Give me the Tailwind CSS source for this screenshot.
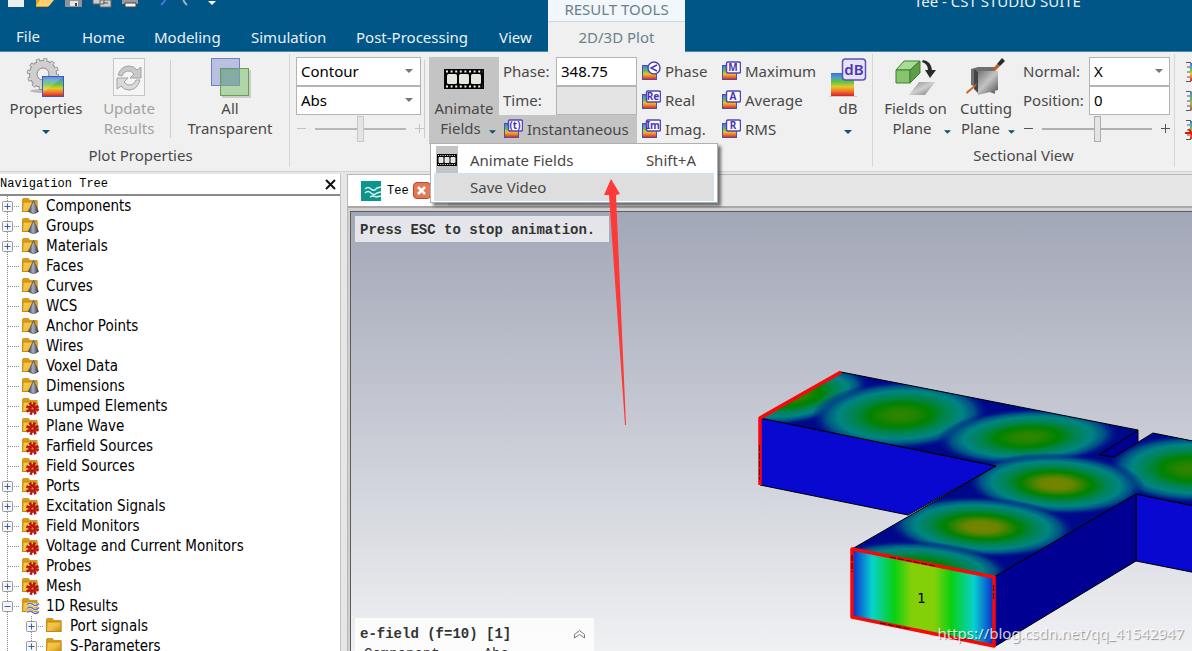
<!DOCTYPE html>
<html lang="en">
<head>
  <meta charset="UTF-8" />
  <meta name="viewport" content="width=device-width, initial-scale=1.0"/>
  <title>Tee - CST STUDIO SUITE</title>
  <script src="https://cdn.jsdelivr.net/npm/@tailwindcss/browser@4"></script>
</head>
<body class="h-screen overflow-hidden flex flex-col bg-[#e6e6e6] text-[#484848] text-[15px] leading-5 font-['Noto_Sans',sans-serif]">

  <!-- Shared icons -->
  <svg class="absolute w-0 h-0">
    <defs>
      <linearGradient id="rainbow" x1="0" y1="0" x2="0" y2="1">
        <stop offset="0" stop-color="#3f6fe0"/><stop offset=".2" stop-color="#4fa0c8"/><stop offset=".38" stop-color="#59c53c"/>
        <stop offset=".6" stop-color="#e6c62c"/><stop offset=".8" stop-color="#f0742a"/><stop offset="1" stop-color="#d81f26"/>
      </linearGradient>
      <linearGradient id="folderFill" x1="0" y1="0" x2="1" y2="1">
        <stop offset="0" stop-color="#f6c93f"/><stop offset=".5" stop-color="#f0c04a"/><stop offset="1" stop-color="#c98a08"/>
      </linearGradient>
      <linearGradient id="metal" x1="0" y1="0" x2="1" y2="1">
        <stop offset="0" stop-color="#6a6a6a"/><stop offset=".5" stop-color="#c4c4c4"/><stop offset="1" stop-color="#4a4a4a"/>
      </linearGradient>
      <linearGradient id="cone" x1="0" y1="0" x2="1" y2="0">
        <stop offset="0" stop-color="#3c3f4c"/><stop offset=".45" stop-color="#a9b0c8"/><stop offset="1" stop-color="#33353f"/>
      </linearGradient>
    </defs>
    <symbol id="plot" viewBox="0 0 20 20">
      <rect x="1.500" y="4.500" width="14" height="14" fill="url(#rainbow)" stroke="#4a4fb0"/>
      <rect x="5.500" y="1" width="14" height="11" rx="1.500" fill="#fff" stroke="#5543b8" stroke-width="1.500"/>
    </symbol>
    <symbol id="film" viewBox="0 0 40 20">
      <rect width="40" height="20" fill="#050505"/>
      <path d="M2 2.500H39M2 17.500H39" stroke="#eee" stroke-width="2" stroke-dasharray="2 2.600"/>
      <g fill="#e4e6e0"><rect x="3" y="5" width="10" height="10" rx="1.500"/><rect x="15" y="5" width="10" height="10" rx="1.500"/><rect x="27" y="5" width="10" height="10" rx="1.500"/></g>
    </symbol>
    <symbol id="down" viewBox="0 0 8 4"><path d="M0 0H8L4 4Z" fill="currentColor"/></symbol>
    <symbol id="folder" viewBox="0 0 20 20">
      <path d="M2 3.500Q2 2 3.500 2H8.500L10 4H17.500V16H2Z" fill="#d69a1c"/>
      <path d="M3 6H17V15.500H2.500Z" fill="url(#folderFill)" stroke="#c48a10"/>
    </symbol>
    <symbol id="folder-cone" viewBox="0 0 20 20">
      <use href="#folder"/>
      <path d="M13.500 4.500L18.500 15.500Q13.500 19.500 8.500 15.500Z" fill="url(#cone)" stroke="#333" stroke-width=".6"/>
    </symbol>
    <symbol id="folder-gear" viewBox="0 0 20 20">
      <use href="#folder"/>
      <circle cx="12.500" cy="12.500" r="5" fill="none" stroke="#b31212" stroke-width="3" stroke-dasharray="2.400 1.530"/>
      <circle cx="12.500" cy="12.500" r="4.200" fill="#c41818"/>
      <circle cx="12.500" cy="12.500" r="1.500" fill="#d98a2c" stroke="#7a0c0c" stroke-width=".6"/>
    </symbol>
    <symbol id="folder-waves" viewBox="0 0 20 20">
      <use href="#folder"/>
      <path d="M7 8.500q3-2.500 6 0t6-1M7 12.500q3-2.500 6 0t6-1M7 16.500q3-2.500 6 0t6-1" fill="none" stroke="#fff" stroke-width="2.600"/>
      <path d="M7 8.500q3-2.500 6 0t6-1M7 12.500q3-2.500 6 0t6-1M7 16.500q3-2.500 6 0t6-1" fill="none" stroke="#6470b0" stroke-width="1.400"/>
    </symbol>
    <symbol id="branch" viewBox="0 0 20 20">
      <path d="M7.500 0V20M8 10.500H20" stroke="#888" stroke-dasharray="1 1"/>
    </symbol>
    <symbol id="line" viewBox="0 0 24 20">
      <path d="M7.500 0V20" stroke="#888" stroke-dasharray="1 1"/>
    </symbol>
    <symbol id="plus" viewBox="0 0 20 20">
      <use href="#branch"/>
      <rect x="2.500" y="5.500" width="10" height="10" rx="1" fill="#f6f6f6" stroke="#9a9a9a"/>
      <path d="M4.500 10.500H10.500M7.500 7.500V13.500" stroke="#3a5cb0"/>
    </symbol>
    <symbol id="minus" viewBox="0 0 20 20">
      <use href="#branch"/>
      <rect x="2.500" y="5.500" width="10" height="10" rx="1" fill="#f6f6f6" stroke="#9a9a9a"/>
      <path d="M4.500 10.500H10.500" stroke="#3a5cb0"/>
    </symbol>
    <symbol id="scale" viewBox="0 0 20 20">
      <path d="M1 .5H6M1 19.500H6M2 5H6M2 10H6M2 15H6M5.500 0V20" stroke="#555"/>
      <rect x="5" y="1" width="14" height="18" fill="url(#rainbow)"/>
    </symbol>
  </svg>

  <!-- Title bar and ribbon tabs -->
  <header class="flex h-[52px] shrink-0 bg-[#005687] text-[#e8f0f5]">
    <div class="w-[548px] shrink-0 flex flex-col border-b border-[#4b86ab]">
      <svg class="h-[27px] w-[240px]" viewBox="0 0 240 27">
        <path d="M8-6H24V7H8Z" fill="#eceff0"/>
        <path d="M36-4H52V1L48 7H36Z" fill="#e8a01e"/><path d="M40 0H54L49 6H36Z" fill="#ffd070"/>
        <path d="M65-6H82V7H65Z" fill="#8e9496"/><path d="M70 1H78V6H70Z" fill="#e4e4e4"/><path d="M75 3H77V6H75Z" fill="#444"/>
        <path d="M93-4H104V4H93ZM100 0H111V7H100Z" fill="#c9cdce" stroke="#666"/><path d="M103 3H108" stroke="#555"/>
        <path d="M122-2H138V4H122Z" fill="#999"/><path d="M125 3H136V7H125Z" fill="#f3f3f3" stroke="#444"/>
        <path d="M161 5Q165 2 166-3" fill="none" stroke="#4676e8" stroke-width="2"/>
        <path d="M187 5Q183 2 183-3" fill="none" stroke="#a8b4bc" stroke-width="2"/>
        <path d="M208 1H216L212 5Z" fill="#fff"/>
      </svg>
      <nav class="flex pl-4">
        <a href="#" class="w-[66px] -mt-px">File</a>
        <a href="#" class="w-[72px]">Home</a>
        <a href="#" class="w-[97px]">Modeling</a>
        <a href="#" class="w-[105px]">Simulation</a>
        <a href="#" class="w-[143px]">Post-Processing</a>
        <a href="#">View</a>
      </nav>
    </div>
    <div class="w-[137px] shrink-0 flex flex-col text-center text-[#6b7f8c]">
      <div class="h-[23px] leading-[18px] bg-[#f1f7fb] border-b border-[#ccd6dc]">RESULT TOOLS</div>
      <a href="#" class="flex-1 bg-[#f0f0f0] leading-[30px]">2D/3D Plot</a>
    </div>
    <div class="flex-1 pl-[229px] border-b border-[#4b86ab] leading-[3px] whitespace-nowrap">Tee - CST STUDIO SUITE</div>
  </header>

  <!-- Ribbon -->
  <section class="flex h-[120px] shrink-0 pt-0.5 pb-1 bg-[#f0f0f0] border-b border-[#d2d2d2] whitespace-nowrap">

    <div class="w-[290px] shrink-0 pt-[3px] border-r border-[#d6d6d6]">
      <div class="flex h-[87px] pl-1">
        <button class="w-[84px] flex flex-col items-center">
          <svg class="h-[41px] w-[40px] shrink-0" viewBox="0 0 40 41">
            <ellipse cx="20" cy="34" rx="16" ry="2" fill="#bbb"/>
            <circle cx="17" cy="17" r="13.500" fill="none" stroke="#8b8b8b" stroke-width="5" stroke-dasharray="3.600 3.468"/>
            <circle cx="17" cy="17" r="9.500" fill="none" stroke="#8b8b8b" stroke-width="9"/>
            <circle cx="17" cy="17" r="13.500" fill="none" stroke="#d9d9d9" stroke-width="3.500" stroke-dasharray="2.400 4.668" stroke-dashoffset="-.6"/>
            <circle cx="17" cy="17" r="9.500" fill="none" stroke="#cfcfcf" stroke-width="7"/>
            <circle cx="17" cy="17" r="6" fill="#f0f0f0" stroke="#8b8b8b"/>
            <rect x="16.500" y="19.500" width="21" height="20" fill="url(#rainbow)" stroke="#4258b8"/>
            <path d="M17 36L37 20H17Z" fill="#fff" opacity=".2"/>
          </svg>
          <span>Properties</span>
          <svg class="mt-3 w-2 h-1 text-[#0b5078]"><use href="#down"/></svg>
        </button>
        <button class="w-[82px] flex flex-col items-center text-[#a2a2a2]" disabled>
          <svg class="h-[41px] w-[36px] shrink-0" viewBox="0 0 36 41">
            <rect x="2.500" y="1.500" width="31" height="37" fill="#f5f5f5" stroke="#c6c6c6"/>
            <path d="M7 18Q10 9 18 9Q23 9 26 13L30 10V21H19L23 17Q20 13 16 14Q12 15 11 19Z" fill="#c9c9c9" stroke="#a2a2a2"/>
            <path d="M29 23Q26 33 18 33Q13 33 10 29L6 32V21H17L13 25Q16 29 20 28Q24 27 25 23Z" fill="#dadada" stroke="#a2a2a2"/>
          </svg>
          <span>Update</span>
          <span>Results</span>
        </button>
        <div class="w-px h-[78px] mt-[3px] bg-[#cdcdcd]"></div>
        <button class="w-[118px] flex flex-col items-center">
          <svg class="h-[41px] w-[42px] shrink-0" viewBox="0 0 42 41">
            <path d="M13 40H41V13" fill="none" stroke="#ccc" stroke-width="2"/>
            <rect x="2.500" y="1.500" width="28" height="27" fill="#b9c0e0" stroke="#7080c8"/>
            <rect x="11.500" y="11.500" width="28" height="27" fill="#b2d4a6" stroke="#62a052"/>
            <path d="M12 12H30.500V28.500H12Z" fill="#84aba4" stroke="#7a9aa8"/>
            <path d="M11.500 28.500V11.500H30.500" fill="none" stroke="#62a052"/>
          </svg>
          <span>All</span>
          <span>Transparent</span>
        </button>
      </div>
      <p class="text-center pr-2 h-[23px] leading-[22px]">Plot Properties</p>
    </div>

    <div class="w-[583px] shrink-0 pt-[3px] border-r border-[#d6d6d6] flex">
      <div class="w-[129px] ml-1.5 h-[87px] flex flex-col">
        <div class="relative w-[125px]">
          <select aria-label="Plot type" class="appearance-none block w-full h-[29px] px-1 pb-0.5 border border-[#b4b4b4] bg-white text-black"><option>Contour</option></select>
          <svg class="absolute right-2 top-3 w-2 h-1 text-[#777] pointer-events-none"><use href="#down"/></svg>
        </div>
        <div class="relative w-[125px]">
          <select aria-label="Component" class="appearance-none block w-full h-[29px] px-1 pb-0.5 border border-[#b4b4b4] bg-white text-black"><option>Abs</option></select>
          <svg class="absolute right-2 top-3 w-2 h-1 text-[#777] pointer-events-none"><use href="#down"/></svg>
        </div>
        <div class="flex items-center gap-2 h-[27px] text-[#c4c4c4]">
          <button aria-label="Decrease" class="w-[11px]"><svg class="w-[11px] h-[11px]" viewBox="0 0 11 11"><path d="M1 5.500H10" stroke="currentColor"/></svg></button>
          <input type="range" aria-label="Contour level" value="50" class="appearance-none w-[91px] h-[26px] bg-transparent [&::-webkit-slider-runnable-track]:h-[2px] [&::-webkit-slider-runnable-track]:bg-[#b8b8b8] [&::-webkit-slider-thumb]:appearance-none [&::-webkit-slider-thumb]:w-[7px] [&::-webkit-slider-thumb]:h-[26px] [&::-webkit-slider-thumb]:-mt-3 [&::-webkit-slider-thumb]:bg-[#e4e4e4] [&::-webkit-slider-thumb]:border [&::-webkit-slider-thumb]:border-[#c8c8c8]"/>
          <button aria-label="Increase" class="w-[11px]"><svg class="w-[11px] h-[11px]" viewBox="0 0 11 11"><path d="M1 5.500H10M5.500 1V10" stroke="currentColor"/></svg></button>
        </div>
      </div>
      <div class="w-px h-[78px] -ml-px mt-[3px] mr-1 bg-[#cdcdcd]"></div>

      <div class="relative flex h-[87px] w-[208px]">
        <button class="w-[70px] flex flex-col items-center bg-[#c4c4c4]">
          <svg class="h-[41px] w-[40px] shrink-0"><use href="#film" y="12" width="40" height="20"/></svg>
          <span>Animate</span>
          <span class="flex items-center gap-2 pl-2">Fields <svg class="w-[7px] h-1 mt-2 text-[#0b5078]"><use href="#down"/></svg></span>
        </button>
        <div class="flex-1 flex flex-col">
          <div class="flex items-center pl-1 h-[29px]">
            <label for="phase" class="w-[53px] pb-0.5">Phase:</label>
            <input id="phase" type="text" value="348.75" class="w-[81px] h-[29px] px-1 pb-0.5 border border-[#b4b4b4] bg-white text-black"/>
          </div>
          <div class="flex items-center pl-1 h-[29px]">
            <label for="time" class="w-[53px] pb-0.5">Time:</label>
            <input id="time" type="text" disabled class="w-[81px] h-[29px] px-1 border border-[#b4b4b4] bg-[#e4e4e4]"/>
          </div>
          <button class="flex items-center gap-1 pl-1 pb-0.5 h-[29px] bg-[#c4c4c4]">
            <svg class="w-5 h-5 shrink-0"><use href="#plot"/><text x="12" y="10" text-anchor="middle" class="text-[10px] font-bold fill-[#4a35b5]">(t)</text></svg>
            Instantaneous
          </button>
        </div>

        <!-- Drop-down of Animate Fields -->
        <div class="absolute z-20 top-[86px] left-px w-[288px] h-[60px] p-[3px] pt-0.5 bg-white border border-[#b0b0b0] shadow-[3px_3px_3px_#00000088]">
          <button class="flex items-center w-full h-[27px] pl-0.5 pr-[18px]">
            <span class="w-[22px] h-[27px] bg-[#c4c4c4] flex items-center justify-center"><svg class="w-5 h-3" viewBox="0 0 40 20" preserveAspectRatio="none"><use href="#film"/></svg></span>
            <span class="pl-3">Animate Fields</span>
            <span class="ml-auto">Shift+A</span>
          </button>
          <button class="flex items-center w-full h-7 pl-[35px] bg-[#dedede] border border-[#c8e6f8]">Save Video</button>
        </div>
      </div>

      <div class="grid grid-cols-[80px_103px] auto-rows-[29px] h-[87px] pl-1">
        <button class="flex items-center gap-1 pb-0.5"><svg class="w-5 h-5 shrink-0"><rect x="1.500" y="4.500" width="14" height="14" fill="url(#rainbow)" stroke="#4a4fb0"/><circle cx="13" cy="7" r="6" fill="#fff" stroke="#5543b8" stroke-width="1.500"/><path d="M16 4L10 7L16 10" fill="none" stroke="#4a35b5" stroke-width="1.500"/></svg>Phase</button>
        <button class="flex items-center gap-1 pb-0.5"><svg class="w-5 h-5 shrink-0"><use href="#plot"/><text x="12" y="10" text-anchor="middle" class="text-[10px] font-bold fill-[#4a35b5]">M</text></svg>Maximum</button>
        <button class="flex items-center gap-1 pb-0.5"><svg class="w-5 h-5 shrink-0"><use href="#plot"/><text x="12" y="10" text-anchor="middle" class="text-[10px] font-bold fill-[#4a35b5]">Re</text></svg>Real</button>
        <button class="flex items-center gap-1 pb-0.5"><svg class="w-5 h-5 shrink-0"><use href="#plot"/><text x="12" y="10" text-anchor="middle" class="text-[10px] font-bold fill-[#4a35b5]">A</text></svg>Average</button>
        <button class="flex items-center gap-1 pb-0.5"><svg class="w-5 h-5 shrink-0"><use href="#plot"/><text x="12" y="10" text-anchor="middle" class="text-[10px] font-bold fill-[#4a35b5]">Im</text></svg>Imag.</button>
        <button class="flex items-center gap-1 pb-0.5"><svg class="w-5 h-5 shrink-0"><use href="#plot"/><text x="12" y="10" text-anchor="middle" class="text-[10px] font-bold fill-[#4a35b5]">R</text></svg>RMS</button>
      </div>
      <button class="w-[48px] h-[87px] flex flex-col items-center">
        <svg class="h-[41px] w-[38px] shrink-0" viewBox="0 0 38 41">
          <path d="M0 39.500H28" stroke="#ccc"/>
          <rect x="2" y="16" width="23" height="23" fill="url(#rainbow)"/>
          <rect x="13.500" y="2" width="23" height="21" rx="3" fill="#e6e3f6" stroke="#5e50b4" stroke-width="1.500"/>
          <text x="25" y="18" text-anchor="middle" class="text-[15px] font-semibold fill-[#4a35b5]">dB</text>
        </svg>
        <span>dB</span>
        <svg class="mt-3 w-2 h-1 text-[#0b5078]"><use href="#down"/></svg>
      </button>
    </div>

    <div class="w-[302px] shrink-0 pt-[3px] border-r border-[#d6d6d6]">
      <div class="flex h-[87px] pl-[3px]">
        <button class="w-[79px] flex flex-col items-center">
          <svg class="h-[41px] w-[42px] shrink-0" viewBox="0 0 42 41">
            <path d="M1 13L9 4H25L15 13Z" fill="#a8dc94" stroke="#3e7e2e"/>
            <path d="M1 13H15V26H1Z" fill="#86c46e" stroke="#3e7e2e"/>
            <path d="M15 13L25 4V16L15 26Z" fill="#5e9e48" stroke="#3e7e2e"/>
            <path d="M24 25H40L30 38H14Z" fill="url(#metal)" opacity=".75"/>
            <path d="M28 3Q36 4 37 13H41L35 21L30 13H33Q33 7 27 5Z" fill="#2a2a2a"/>
          </svg>
          <span>Fields on</span>
          <span class="flex items-center gap-3 pl-3">Plane <svg class="w-[7px] h-1 mt-2 text-[#0b5078]"><use href="#down"/></svg></span>
        </button>
        <button class="w-[62px] flex flex-col items-center">
          <svg class="h-[41px] w-[42px] shrink-0" viewBox="0 0 42 41">
            <path d="M6 12L13 10H33L30 12V37L6 28Z" fill="#707070"/>
            <path d="M10 14H33V33L13 38Z" fill="url(#metal)"/>
            <path d="M9 12V32L13 36V15Z" fill="#444"/>
            <path d="M1 35L12 26L10 30L2 37Z" fill="#c66a34"/>
            <path d="M27 13L32 7L35 9L30 14Z" fill="#b8612e"/>
            <path d="M32 7L37 1L40 4L35 9Z" fill="#2a2a2a"/>
          </svg>
          <span>Cutting</span>
          <span class="flex items-center gap-2 pl-1">Plane <svg class="w-[7px] h-1 mt-2 text-[#0b5078]"><use href="#down"/></svg></span>
        </button>
        <div class="pl-1.5">
          <div class="flex items-center h-[29px] relative">
            <label for="normal" class="w-[66px] pb-0.5">Normal:</label>
            <select id="normal" class="appearance-none w-[81px] h-[29px] px-1 pb-0.5 border border-[#b4b4b4] bg-white text-black"><option>X</option></select>
            <svg class="absolute right-2 top-3 w-2 h-1 text-[#777] pointer-events-none"><use href="#down"/></svg>
          </div>
          <div class="flex items-center h-[29px]">
            <label for="position" class="w-[66px] pb-0.5">Position:</label>
            <input id="position" type="text" value="0" class="w-[81px] h-[29px] px-1 pb-0.5 border border-[#b4b4b4] bg-white text-black"/>
          </div>
          <div class="flex items-center gap-2 h-[27px] text-[#555]">
            <button aria-label="Move back" class="w-[11px]"><svg class="w-[11px] h-[11px]" viewBox="0 0 11 11"><path d="M1 5.500H10" stroke="currentColor"/></svg></button>
            <input type="range" aria-label="Plane position" value="50" class="appearance-none w-[110px] h-[26px] bg-transparent [&::-webkit-slider-runnable-track]:h-[2px] [&::-webkit-slider-runnable-track]:bg-[#b0b0b0] [&::-webkit-slider-thumb]:appearance-none [&::-webkit-slider-thumb]:w-[7px] [&::-webkit-slider-thumb]:h-[26px] [&::-webkit-slider-thumb]:-mt-3 [&::-webkit-slider-thumb]:bg-[#e4e4e4] [&::-webkit-slider-thumb]:border [&::-webkit-slider-thumb]:border-[#adadad]"/>
            <button aria-label="Move forward" class="w-[11px]"><svg class="w-[11px] h-[11px]" viewBox="0 0 11 11"><path d="M1 5.500H10M5.500 1V10" stroke="currentColor"/></svg></button>
          </div>
        </div>
      </div>
      <p class="text-center h-[23px] leading-[22px]">Sectional View</p>
    </div>

    <div class="flex-1 min-w-0 overflow-hidden pt-[3px] pl-2.5">
      <div class="grid auto-rows-[29px] items-center">
        <svg class="w-5 h-5"><use href="#scale"/></svg>
        <svg class="w-5 h-5"><use href="#scale"/><path d="M5 0H20V20H5Z" fill="#70a070" opacity=".5"/></svg>
        <svg class="w-5 h-5"><use href="#scale"/><path d="M0 13H20M4 9L9 18" stroke="#e01010" stroke-width="2"/></svg>
      </div>
    </div>
  </section>

  <div class="flex-1 min-h-0 flex pt-0.5">

    <!-- Navigation tree -->
    <aside class="w-[341px] shrink-0 bg-white border-r border-[#c4c4c4] overflow-hidden text-black">
      <div class="flex items-center justify-between h-[22px] pr-1 border-b-2 border-[#8a8a8a] text-[12px] font-['Liberation_Mono',monospace]">
        <h2>Navigation Tree</h2>
        <button aria-label="Close"><svg class="w-[11px] h-[11px]" viewBox="0 0 11 11"><path d="M1 1L10 10M10 1L1 10" stroke="#111" stroke-width="2"/></svg></button>
      </div>
      <ul id="tree" class="text-[15px] font-['DejaVu_Sans_Condensed','DejaVu_Sans',sans-serif]"></ul>
    </aside>

    <!-- Document area -->
    <main class="flex-1 min-w-0 ml-1.5 flex flex-col border-l border-t border-[#b8b8b8]">
      <div class="h-[31px] shrink-0 flex">
        <div class="flex items-center w-[100px] pl-[13px] bg-white text-black text-[12px] font-['Liberation_Mono',monospace]">
          <svg class="w-5 h-5 mr-1.5" viewBox="0 0 20 20">
            <rect width="20" height="20" fill="#0d948c"/>
            <path d="M4 8q3-3 6 0t6-1l4-1M4 12q3-3 6 0t6 0l4-1M9 16q3-2 6 0l5-1" fill="none" stroke="#d8f4f0" stroke-width="1.500"/>
          </svg>
          <a href="#">Tee</a>
          <button aria-label="Close tab" class="ml-1 w-[18px] h-[17px] flex items-center justify-center rounded-sm border border-[#c8402c] bg-[#e27a58]">
            <svg class="w-[9px] h-[9px]" viewBox="0 0 9 9"><path d="M1 1L8 8M8 1L1 8" stroke="#fff" stroke-width="2.500"/></svg>
          </button>
        </div>
      </div>
      <div class="flex-1 min-h-0 flex pt-[3px] pl-0.5 border-t-2 border-[#a8a8a8] bg-[#cfcfcf]">
        <div class="relative flex-1 overflow-hidden border-l border-t border-[#5c5c5c] bg-linear-to-b from-[#a2a7b7] to-[#f0f1f3] text-[#333] text-[14px] font-['Liberation_Mono',monospace]">

          <!-- Model -->
          <svg class="absolute inset-0 w-full h-full">
            <defs>
              <radialGradient id="low"><stop offset="0" stop-color="#348400"/><stop offset=".16" stop-color="#248400"/><stop offset=".34" stop-color="#008200"/><stop offset=".52" stop-color="#008450"/><stop offset=".7" stop-color="#008484"/><stop offset=".84" stop-color="#004e86"/><stop offset="1" stop-color="#00108a" stop-opacity="0"/></radialGradient>
              <radialGradient id="high"><stop offset="0" stop-color="#748400"/><stop offset=".18" stop-color="#6c8400"/><stop offset=".4" stop-color="#008200"/><stop offset=".56" stop-color="#008450"/><stop offset=".72" stop-color="#008484"/><stop offset=".85" stop-color="#004e86"/><stop offset="1" stop-color="#00108a" stop-opacity="0"/></radialGradient>
              <linearGradient id="port">
                <stop offset="0" stop-color="#0a28d0"/><stop offset=".14" stop-color="#08d0d0"/><stop offset=".3" stop-color="#08d012"/><stop offset=".42" stop-color="#84d008"/>
                <stop offset=".58" stop-color="#84d008"/><stop offset=".7" stop-color="#08d012"/><stop offset=".86" stop-color="#08d0d0"/><stop offset="1" stop-color="#0a28d0"/>
              </linearGradient>
              <clipPath id="top"><path d="M841 372L1138 430L1099 455L1114 457L1153 433L1292 461V526L1136 494L994 577L852 549L996 466L760 418Z"/></clipPath>
            </defs>
            <g transform="translate(-351 -212)">
              <g stroke="#000" stroke-width="1">
                <path d="M760 418L996 466L908 515L760 485Z" fill="#0808d0"/>
                <path d="M1136 494L1292 526V592L1136 561Z" fill="#0808d0"/>
                <path d="M1136 494V561L994 647V577Z" fill="#000092"/>
                <path d="M1138 430V443L1114 457L1099 455Z" fill="#000092"/>
              </g>
              <g clip-path="url(#top)">
                <path d="M740 360H1292V600H740Z" fill="#00088a"/>
                <circle r="1.240" fill="url(#low)" transform="matrix(44 8 -40 23 796 396)"/>
                <circle r="1.240" fill="url(#low)" transform="matrix(62 12 -36 25 900 415)"/>
                <circle r="1.240" fill="url(#low)" transform="matrix(62 10 -40 21 1028 437)"/>
                <circle r="1.240" fill="url(#low)" transform="matrix(62 12 -26 25 1190 469)"/>
                <circle r="1.240" fill="url(#high)" transform="matrix(66 12 28 -22 1056 484)"/>
                <circle r="1.240" fill="url(#high)" transform="matrix(68 13 32 -21 982 527)"/>
                <circle r="1.240" fill="url(#low)" transform="matrix(66 13 32 -19 919 569)"/>
              </g>
              <path d="M841 372L1138 430L1099 455L1114 457L1153 433L1292 461V526L1136 494L994 577L852 549L996 466L760 418Z" fill="none" stroke="#000"/>
              <path d="M852 549L994 577V647L852 617Z" fill="url(#port)"/>
              <g fill="none" stroke="#f80808" stroke-width="3.500" stroke-linejoin="round">
                <path d="M841 372L760 418V485"/>
                <path d="M852 549L994 577V646L852 617Z"/>
              </g>
              <path d="M759.500 445V480M852 555V572M993.500 585V600M890 557L935 566M880 623L910 629" stroke="#300" stroke-dasharray="6 2"/>
              <text x="917" y="603" class="text-[14px] font-['DejaVu_Sans_Mono',monospace] fill-black">1</text>
            </g>
          </svg>

          <p class="absolute left-1 top-1 w-[254px] h-[26px] pl-[5px] leading-7 bg-white/70 font-bold whitespace-nowrap">Press ESC to stop animation.</p>

          <div class="absolute left-1 bottom-0 w-[239px] h-[33px] pl-[5px] pr-2 pt-1.5 bg-white/80 overflow-hidden">
            <div class="flex items-center justify-between font-bold">
              e-field (f=10) [1]
              <button aria-label="Collapse"><svg class="w-[13px] h-[11px]" viewBox="0 0 13 11"><path d="M1.500 5.500L6.500 1.500L11.500 5.500V9L6.500 5.500L1.500 9Z" fill="none" stroke="#777"/></svg></button>
            </div>
            <div class="flex gap-11 pl-1"><span>Component</span><span>Abs</span></div>
          </div>

          <p class="absolute right-2 bottom-1.5 text-[15px] leading-6 text-white/80 font-['Noto_Sans',sans-serif] [text-shadow:1px_1px_1px_#00000066]">https://blog.csdn.net/qq_41542947</p>
        </div>
      </div>
    </main>
  </div>

  <!-- Pointer arrow over the menu -->
  <svg class="absolute z-30 left-[600px] top-[176px] w-[32px] h-[252px] pointer-events-none" viewBox="0 0 32 252">
    <path d="M11 3L20 18L16 19L26 249H25L9 19L4 19Z" fill="#fd3a38"/>
  </svg>

  <script>
    // Entries of the navigation tree: label, folder icon, expander, depth
    const nodes = [
      ['Components', 'folder-cone', 'plus'],
      ['Groups', 'folder-cone', 'plus'],
      ['Materials', 'folder-cone', 'plus'],
      ['Faces', 'folder-cone'],
      ['Curves', 'folder-cone'],
      ['WCS', 'folder-cone'],
      ['Anchor Points', 'folder-cone'],
      ['Wires', 'folder-cone'],
      ['Voxel Data', 'folder-cone'],
      ['Dimensions', 'folder-cone'],
      ['Lumped Elements', 'folder-gear'],
      ['Plane Wave', 'folder-gear'],
      ['Farfield Sources', 'folder-gear'],
      ['Field Sources', 'folder-gear'],
      ['Ports', 'folder-gear', 'plus'],
      ['Excitation Signals', 'folder-gear', 'plus'],
      ['Field Monitors', 'folder-gear', 'plus'],
      ['Voltage and Current Monitors', 'folder-gear'],
      ['Probes', 'folder-gear'],
      ['Mesh', 'folder-gear', 'plus'],
      ['1D Results', 'folder-waves', 'minus'],
      ['Port signals', 'folder', 'plus', 1],
      ['S-Parameters', 'folder', 'plus', 1]
    ];

    document.getElementById('tree').innerHTML = nodes.map(([label, icon, toggle, depth]) => `
      <li class="flex items-center h-5 whitespace-nowrap">
        ${depth ? '<svg class="w-6 h-5 shrink-0"><use href="#line"/></svg>' : ''}
        ${toggle
          ? `<button aria-label="Toggle ${label}" class="shrink-0"><svg class="w-5 h-5"><use href="#${toggle}"/></svg></button>`
          : '<svg class="w-5 h-5 shrink-0"><use href="#branch"/></svg>'}
        <svg class="w-5 h-5 mr-1.5 shrink-0"><use href="#${icon}"/></svg>
        <span>${label}</span>
      </li>
    `).join('');
  </script>

</body>
</html>
